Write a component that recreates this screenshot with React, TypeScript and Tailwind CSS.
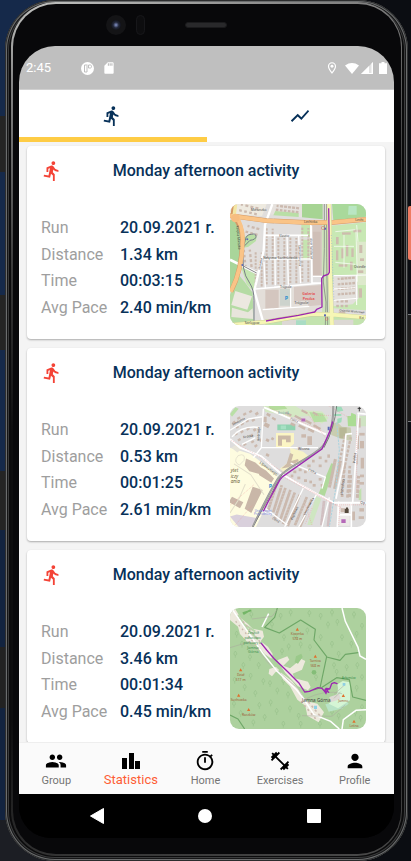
import React from "react";
import {
  MdDirectionsRun,
  MdFitnessCenter,
  MdOutlineTimer,
  MdPeople,
  MdPerson,
  MdSdCard,
  MdShowChart,
  MdOutlineLocationOn,
} from "react-icons/md";

type Pt = [number, number];
type Box = [number, number, number, number];

function Blocks({ items, fill, angle = 0 }: { items: Box[]; fill: string; angle?: number }) {
  return (
    <g fill={fill}>
      {items.map(([x, y, w, h], i) => (
        <rect key={i} x={x} y={y} width={w} height={h} transform={`rotate(${angle} ${x} ${y})`} />
      ))}
    </g>
  );
}

/* Evenly spaced small houses along both sides of a street. */
function Houses({ from, to, count, offset = 9, size = 7, fill = "#cbb9ae" }: { from: Pt; to: Pt; count: number; offset?: number; size?: number; fill?: string }) {
  const dx = to[0] - from[0];
  const dy = to[1] - from[1];
  const len = Math.hypot(dx, dy);
  const angle = (Math.atan2(dy, dx) * 180) / Math.PI;
  return (
    <g fill={fill}>
      {Array.from({ length: count }, (_, i) => {
        const t = (i + 0.5) / count;
        const x = from[0] + dx * t;
        const y = from[1] + dy * t;
        return [-1, 1].map((s) => {
          const cx = x - (dy / len) * offset * s;
          const cy = y + (dx / len) * offset * s;
          const k = size + ((i * 3 + s) % 3);
          return (
            <rect key={`${i}${s}`} x={cx - k / 2} y={cy - size / 2} width={k} height={size} transform={`rotate(${angle} ${cx} ${cy})`} />
          );
        });
      })}
    </g>
  );
}

const mapText = "[font-family:'Noto_Sans',sans-serif]";

function CityMap() {
  return (
    <svg viewBox="24 27 408 363" preserveAspectRatio="none" className="block h-full w-full" role="img" aria-label="Route map">
      <rect x="24" y="27" width="408" height="363" fill="#e0dedd" />
      <path d="M24 27h110l-14 36-96-6z" fill="#eeeae0" />
      <path d="M24 75h30l4 80-14 90-20 40z" fill="#a9d59a" />
      <path d="M64 90l50 10 6 30-16 90-42-10z" fill="#e2dfdd" />
      <path d="M62 130l26-16 16 8-2 16-24 18-16 2z" fill="#b9dfa6" />
      <path d="M52 212l50 26-8 50-20-20-12-38z" fill="#c4e5b1" />
      <path d="M46 235l22 26 24 32 3 97H24v-90z" fill="#b5dba4" />
      <path d="M40 288l50 16-14 40-48-14z" fill="#ece8e0" />
      <path d="M30 338l48 14 14-12 2 32-66-6z" fill="#e8e5dc" />
      <path d="M240 27h62v46l-62-6z" fill="#a6d493" />
      <path d="M330 27h102v38l-98 12z" fill="#a9d99b" />
      <path d="M380 33h24v26h-26z" fill="#b9e6c3" />
      <path d="M150 27h90v40l-98-9z" fill="#e6e2de" />
      <path d="M160 48l70 6v12l-76-5z" fill="#b9dfa6" />
      <path d="M328 92l104-10v264l-102-6z" fill="#c8e8b4" />
      <path d="M334 240h70l6 70-18 18-60 6z" fill="#e3e0dc" />
      <path d="M404 140h28v130h-26z" fill="#dde9cc" />
      <path d="M238 90h28v36h-28zM242 134h20v60h-20z" fill="#c5e4b0" />
      <path d="M300 85h20v270h-20z" fill="#cfe3bd" />
      <path d="M130 372l140-20 160 14v24H130z" fill="#c3e3af" />
      <path d="M180 374h70v16h-70zM334 374h60v16h-60z" fill="#dcd8d4" />
      <path d="M222 376h30v14h-30z" fill="#a9dcc4" />
      <path d="M270 82l30 3v158h-28z" fill="#d6c9c2" />
      <path d="M272 110h24v130h-24z" fill="#cfbfb7" />
      <path d="M104 284l194-16 2 68-30 16-148 24z" fill="#e3ded9" />
      <path d="M130 284h40v58h-40z" fill="#d4c6bf" />
      <path d="M174 282h34v50h-34z" fill="#cdd3cd" />
      <path d="M216 276l82-6v60l-40 4v-16h-42z" fill="#d6c9c3" />
      <g>
        {([[143, 98, 270], [178, 126, 270], [214, 126, 266], [250, 96, 262], [110, 170, 276]] as [number, number, number][]).map(([x, a, b]) => (
          <Houses key={x} from={[x, a]} to={[x, b]} count={Math.round((b - a) / 11)} offset={9} size={6} />
        ))}
        <Houses from={[70, 100]} to={[112, 112]} count={3} />
        <Houses from={[74, 160]} to={[80, 220]} count={4} />
        <Houses from={[160, 38]} to={[232, 46]} count={6} offset={6} />
        <Houses from={[50, 36]} to={[110, 50]} count={4} />
        <Houses from={[345, 260]} to={[400, 256]} count={5} offset={8} />
        <Houses from={[345, 290]} to={[400, 286]} count={5} offset={8} />
        <Houses from={[340, 326]} to={[380, 326]} count={3} offset={7} />
      </g>
      <Blocks fill="#cdbcae" items={[[342, 126, 8, 22], [360, 112, 26, 7], [394, 104, 24, 8], [358, 160, 7, 30], [372, 150, 7, 34], [388, 160, 7, 26], [342, 166, 7, 30], [412, 150, 9, 24], [414, 190, 12, 8], [350, 208, 26, 7], [384, 200, 8, 26], [408, 226, 16, 8], [410, 280, 10, 28], [350, 350, 20, 6]]} />
      <path d="M340 110l60-6M366 120v98M340 202l60 6M402 110l4 150M404 90l4 50M336 154h60" stroke="#fff" strokeWidth="2" fill="none" />
      <g stroke="#fff" fill="none" strokeWidth="5">
        <path d="M151 27l-22 62-4 78-28 120 27 96" strokeWidth="7" />
        <path d="M24 194l40 20 42 20" strokeWidth="8" />
        <path d="M126 121h132M126 192h142M100 282l200-18M268 92l2 172h30" strokeWidth="5" />
        <path d="M158 121l2 150M195 121l4 148M230 121l6 144M266 90v70M126 200l4 80M206 280v60M122 344l140-10M272 244h28" strokeWidth="4" />
        <path d="M334 242l98-2M404 240v90M334 282l66-4M336 316l70-6" strokeWidth="3" />
      </g>
      <path d="M64 156l20-20q18-2 18-12t-14-6q-16 0-18 18l-8 24 2 56q4 28 20 50 12 18 12 50v70" fill="none" stroke="#777d86" strokeWidth="3" />
      <path d="M62 212l42 22" stroke="#858585" strokeWidth="3" />
      <path d="M307 27v134l-3 100 8 60-2 69M314 27v160l3 203" stroke="#858b83" strokeWidth="2.5" fill="none" />
      <path d="M24 62l110 15 130 6 70-1 98-9" fill="none" stroke="#d59a65" strokeWidth="14" />
      <path d="M36 27l-3 36q30 30 28 76-2 90-34 150" fill="none" stroke="#d59a65" strokeWidth="14" />
      <path d="M24 62l110 15 130 6 70-1 98-9" fill="none" stroke="#fac487" strokeWidth="12" />
      <path d="M40 62q24 30 22 76-2 90-36 152" fill="none" stroke="#fac487" strokeWidth="12" />
      <path d="M41 27l-5 36" stroke="#f3e7a4" strokeWidth="10" />
      <circle cx="40" cy="69" r="13" fill="#f6bd81" />
      <path d="M321 27l3 130v70l6 163M24 390l106-9 140-24 60 2 102 8" fill="none" stroke="#cdd099" strokeWidth="13" />
      <path d="M321 27l3 130v70l6 163M24 390l106-9 140-24 60 2 102 8" fill="none" stroke="#f6f6b5" strokeWidth="11" />
      <path d="M328 120l8 200" stroke="#7fa8d6" strokeDasharray="3 5" strokeWidth="1.5" />
      <g className={mapText} fontSize="10" fill="#444">
        <text x="86" y="48">Mieszczko</text>
        <text x="246" y="84">Lechicka</text>
        <text x="400" y="77">Lechi</text>
        <text x="172" y="127" fontSize="8">Klasztor</text>
        <text x="124" y="193" fontSize="9">Nałęczow</text>
        <text x="168" y="193" fontSize="9">Lazienkowska</text>
        <text x="174" y="278" fontSize="9">Trójpole</text>
        <text x="217" y="327" fontSize="11">Trójpole</text>
        <text x="396" y="218">Osiedle</text>
        <text x="352" y="349" fontSize="9" transform="rotate(5 352 349)">Osiedle Wichrowe</text>
        <text x="412" y="371">Ksi</text>
        <text x="68" y="387">Szelągow</text>
        <text transform="translate(43 92) rotate(85)">Księcia Mieszka</text>
        <text transform="translate(264 130) rotate(88)" fontSize="9">Aleje Solidarne</text>
        <text transform="translate(229 150) rotate(88)" fontSize="9">Sarmacka ulica</text>
        <text transform="translate(114 224) rotate(-78)" fontSize="9">Murawa</text>
      </g>
      <g className={mapText} fontSize="11" fill="#e54848" fontWeight="600">
        <text x="241" y="301">Galeria</text>
        <text x="242" y="314">Pestka</text>
      </g>
      <text x="188" y="316" className={mapText} fontSize="16" fontWeight="700" fill="#2a8fd0">P</text>
      <g fill="#5a68b5">
        <rect x="306" y="98" width="6" height="6" />
        <rect x="306" y="358" width="6" height="6" />
        <circle cx="61" cy="210" r="3" />
        <circle cx="76" cy="133" r="3" />
      </g>
      <g fill="none" stroke="#e06a60" strokeWidth="1.5">
        <circle cx="303" cy="99" r="5" />
        <circle cx="314" cy="372" r="4" />
      </g>
      <path d="M320 40l1 60 1 132-4 6-14 5-5 8 1 85-16 7-6 8-9 2-40 8-66 11-31 6" fill="none" stroke="#9c27b0" strokeWidth="4" strokeLinejoin="round" />
    </svg>
  );
}

function DistrictMap() {
  return (
    <svg viewBox="24 36 408 360" preserveAspectRatio="none" className="block h-full w-full" role="img" aria-label="Route map">
      <rect x="24" y="36" width="408" height="360" fill="#dedddd" />
      <path d="M24 160l60 18 84 62-20 60-46 96H24z" fill="#fefce0" />
      <path d="M24 365l20-6 60 10-16 27H50z" fill="#d9d0dc" />
      <path d="M28 160l20-12 14 14-16 12z" fill="#e7e4d8" />
      <path d="M124 36h96l20 12 60 4 20 20-20 16-50-20-50 4-40-14-30-4z" fill="#d4e8c3" />
      <path d="M140 36h48l8 8-50 6z" fill="#b4dc9c" />
      <path d="M200 70l60-4 36 20 4 34-50-20z" fill="#dedbd8" />
      <path d="M262 54l40 4 14 24-40 2z" fill="#b6dfa2" />
      <path d="M24 60l16-20 10 4-20 24z" fill="#b9dfa6" />
      <path d="M166 91h54v17h-54z" fill="#8fd3b0" />
      <path d="M176 94h16v11h-16z" fill="#a7e0c4" />
      <path d="M162 116h54v32l-14 12h-40z" fill="#fbf5c4" />
      <path d="M168 124h38v20h-14v-8h-12v18h-12z" fill="#cbb9a7" />
      <path d="M204 160l40 12 14 12-72 48-12-10 34-24z" fill="#f7f3c6" />
      <path d="M204 176l10 4-6 20 20-6 2 6-30 18-22 4 16-14z" fill="#cdbba8" />
      <path d="M326 90l20-6 14 14 26 2 4 40-30-6-32-12z" fill="#c9cdb0" />
      <path d="M352 100h22v32h-22z" fill="#b8b896" />
      <path d="M340 38h18l6 12-18 4zM346 74l14-4-2 14-12 4zM336 60h22v6h-22z" fill="#9fdcbb" />
      <path d="M376 66h26v30h-24zM388 56l14 6v6h-16z" fill="#abdc94" />
      <path d="M404 66h28v30h-26z" fill="#cfe3c3" />
      <path d="M328 206l12 4-32 94-18-8z" fill="#b0d99b" />
      <path d="M282 304l16 8-28 78h-14z" fill="#cfe6c1" />
      <path d="M410 290l8-10v36h-8z" fill="#c0e0ae" />
      <path d="M345 326h40v32h-40zM345 362h38v30h-38z" fill="#eeeae9" />
      <Blocks fill="#cbb9ae" angle={-32} items={[[40, 98, 9, 7], [54, 88, 10, 8], [70, 80, 9, 7], [88, 78, 10, 7], [30, 84, 9, 7], [44, 72, 10, 7], [62, 60, 10, 7], [80, 52, 9, 7], [98, 58, 10, 8], [36, 118, 9, 8], [54, 112, 9, 7], [72, 104, 10, 7], [92, 106, 9, 8], [46, 136, 9, 7], [62, 150, 10, 7], [86, 142, 9, 7], [96, 154, 9, 7], [110, 136, 8, 8], [84, 122, 8, 7]]} />
      <Blocks fill="#c9b7ab" angle={28} items={[[136, 56, 12, 8], [130, 84, 16, 12], [152, 68, 12, 7], [192, 52, 20, 7], [220, 62, 22, 7], [252, 76, 20, 7], [276, 90, 24, 7], [232, 90, 22, 8], [260, 100, 20, 8], [208, 84, 14, 8], [134, 132, 10, 8], [150, 128, 8, 8], [134, 176, 10, 8], [240, 46, 20, 6], [274, 52, 16, 6]]} />
      <Blocks fill="#cbb9ae" items={[[256, 126, 14, 26], [238, 120, 14, 10], [124, 68, 10, 16], [290, 186, 9, 8], [270, 196, 8, 8], [308, 196, 8, 8], [256, 210, 10, 8], [230, 222, 9, 8], [246, 228, 8, 8], [290, 210, 9, 8], [214, 228, 9, 8], [206, 240, 8, 8], [226, 246, 9, 8], [246, 254, 9, 8], [262, 258, 8, 8], [290, 250, 9, 8], [296, 268, 8, 8], [272, 268, 9, 8], [316, 180, 8, 10]]} />
      <path d="M72 192l28 12 20 18-8 16-30-8-14-18zM98 208l34 20 24 24-8 12-36-22zM40 200l28-16M92 276l30 10-34 68-20-12zM30 306l34 16-10 18-34-18z" fill="#c9b7a8" />
      <path d="M36 208l50 32 40 60M70 268l-20 46-26 40" fill="none" stroke="#e3dfcb" strokeWidth="3" />
      <Houses from={[172, 268]} to={[146, 350]} count={9} offset={8} size={8} />
      <Houses from={[198, 282]} to={[166, 376]} count={11} offset={8} size={8} />
      <Houses from={[226, 296]} to={[190, 390]} count={11} offset={8} size={8} />
      <Houses from={[262, 310]} to={[226, 394]} count={10} offset={8} size={8} />
      <Houses from={[348, 196]} to={[330, 280]} count={9} offset={8} size={9} />
      <Houses from={[378, 124]} to={[352, 250]} count={10} offset={9} size={7} />
      <Houses from={[398, 240]} to={[394, 310]} count={5} offset={12} size={9} />
      <Houses from={[316, 320]} to={[308, 392]} count={9} offset={10} size={8} fill="#d1bfc1" />
      <Houses from={[376, 210]} to={[368, 310]} count={7} offset={8} size={8} />
      <Blocks fill="#cbb9ae" items={[[406, 72, 10, 28], [402, 124, 9, 40], [398, 180, 9, 30], [412, 116, 16, 8], [414, 140, 12, 22], [416, 190, 10, 32], [414, 240, 12, 8], [412, 262, 14, 8], [412, 340, 14, 10], [410, 364, 16, 8], [390, 350, 9, 26], [356, 340, 12, 12]]} />
      <g fill="none" stroke="#fff">
        <path d="M24 134l30 26 64 26 60 52 110 62 48 24h96" strokeWidth="6" />
        <path d="M126 40l90 38 96 42" strokeWidth="6" />
        <path d="M124 44l-6 116-24 30M118 160h170M24 108l56-34 40-6M30 128q30-36 84-28M60 150l40-20" strokeWidth="4" />
        <path d="M206 206l104 42-10 34M244 280l-56 116M284 298l-54 98M322 308l-22 88M146 360l-30-14 M130 340l66 50" strokeWidth="4" />
        <path d="M410 56l-8 130-10 138M432 60l-26-2M390 118l-18 2-8 90-18 82-4 20M350 320l-4 76M388 324v72M350 360h40" strokeWidth="5" />
        <path d="M48 184q24-10 18 14l-14 14q-20-10-4-28" stroke="#dcd8c8" strokeWidth="2" />
      </g>
      <g fill="none" stroke="#e99" strokeWidth="1.3" strokeDasharray="3 3">
        <path d="M28 138l100 58 100 68 110 66h94M140 40l170 76M250 50l60 80M276 64h50M26 330l70-60M40 390l52-60M190 250l170 90M380 70l-60-34M404 110v180M250 330l20 60M270 340l-20 46M350 390l4-60" />
      </g>
      <path d="M344 86l8 80-10 110-20 120" fill="none" stroke="#a9d3df" strokeWidth="3" strokeDasharray="7 3" />
      <path d="M334 36q0 84-34 122-18 18-72 48-44 24-60 46-26 40-76 144" fill="none" stroke="#969696" strokeWidth="6" />
      <path d="M344 36q-6 64-38 124M180 240l-88 156" fill="none" stroke="#555" strokeWidth="2" />
      <path d="M334 36q0 84-34 122-18 18-72 48-44 24-60 46-26 40-76 144" fill="none" stroke="#a6a6a6" strokeWidth="3" />
      <g className={mapText} fontSize="11" fill="#444">
        <text x="228" y="168" fontSize="10">Wiosna</text>
        <text transform="translate(32 94) rotate(-26)" fontSize="9">Sandomie</text>
        <text transform="translate(64 132) rotate(-8)" fontSize="10">Krótka</text>
        <text transform="translate(112 206) rotate(36)" fontSize="11">Lipowskiego</text>
        <text transform="translate(112 140) rotate(-88)" fontSize="10">Andrzeja</text>
        <text transform="translate(204 76) rotate(24)" fontSize="9">Piotra</text>
        <text transform="translate(258 228) rotate(26)" fontSize="10">Cicha</text>
        <text transform="translate(400 206) rotate(-86)" fontSize="10">Polska</text>
        <text transform="translate(360 300) rotate(-80)" fontSize="10">Jasna Rola</text>
        <text transform="translate(250 362) rotate(-62)" fontSize="10">Umultowska</text>
        <text transform="translate(212 376) rotate(-66)" fontSize="10">Piątkowo</text>
        <text transform="translate(150 372) rotate(30)" fontSize="9">Cicha</text>
        <text x="415" y="327" fontSize="10">Op</text>
        <text x="168" y="60" fontSize="8" fill="#7aa">Boisko A</text>
      </g>
      <g className={mapText} fontSize="14" fill="#6b5f3a" fontStyle="italic">
        <text x="26" y="233">ytet</text>
        <text x="26" y="249">iczy</text>
        <text x="26" y="266">ania</text>
      </g>
      <g className={mapText} fontSize="9" fill="#7a86dd">
        <text x="98" y="351">Uniwersytet</text>
        <text x="96" y="361">Przyrodniczy</text>
      </g>
      <text x="140" y="279" className={mapText} fontSize="16" fontWeight="700" fill="#2a8fd0">P</text>
      <path d="M412 38v14M407 43h10" stroke="#222" strokeWidth="2.5" />
      <path d="M368 342h12v12h-12zM372 338h6v4h-6z" fill="#54483c" />
      <path d="M238 73h12v9h-12zM358 373h13v11h-13z" fill="#b569b8" />
      <path d="M317 98h6v10h-6z" fill="#5a68b5" />
      <path d="M332 82l-8 28-24 54-118 82-8 9-38 70-12 24" fill="none" stroke="#9c27b0" strokeWidth="4" strokeLinejoin="round" />
    </svg>
  );
}

const trees: Pt[] = [
  [88, 62], [176, 66], [206, 56], [262, 58], [296, 66], [330, 56], [396, 62], [420, 96], [150, 92], [186, 130], [256, 110], [318, 92], [346, 84], [360, 130], [330, 150], [388, 150], [404, 120], [44, 120], [60, 150], [40, 180],
  [84, 190], [64, 214], [110, 214], [38, 258], [86, 246], [124, 262], [68, 280], [100, 298], [144, 268], [166, 290], [36, 330], [112, 334], [146, 326], [184, 262], [198, 302], [128, 370], [164, 352], [204, 344], [230, 366], [94, 386], [184, 390], [236, 390],
  [200, 158], [236, 152], [264, 160], [220, 126], [296, 130], [350, 180], [336, 214], [374, 220], [406, 214], [420, 250], [344, 234], [404, 282], [420, 340], [400, 356], [350, 366], [330, 354], [294, 390], [416, 372], [56, 358], [180, 172], [282, 250],
];

function Peak({ x, y, name, height }: { x: number; y: number; name: string; height?: string }) {
  return (
    <g className={mapText} fontSize="10" fill="#9c5a35" textAnchor="middle">
      <path d={`M${x} ${y - 9}l5 9h-10z`} fill="#e0702c" />
      <text x={x} y={y + 14}>{name}</text>
      {height && <text x={x} y={y + 28}>{height}</text>}
    </g>
  );
}

function ForestMap() {
  return (
    <svg viewBox="24 39 408 363" preserveAspectRatio="none" className="block h-full w-full" role="img" aria-label="Route map">
      <rect x="24" y="39" width="408" height="363" fill="#add19e" />
      <g stroke="#92bd86" fill="none" strokeWidth="1.5">
        {trees.map(([x, y]) => (
          <path key={`${x}-${y}`} d={`M${x} ${y + 8}v-7q-6-1-4-7l4-6 4 6q2 6-4 7`} />
        ))}
      </g>
      {/* open ground along the valley */}
      <g fill="#ede9dd">
        <path d="M24 39h14l18 30 22 18 14 14 30 6 4 18-10 14 22 16 14 22-4 14-20-14-24-30-30-8-20-22-6-22-24-20z" />
        <path d="M166 196l30-12 6 10-18 18 20 8 34-28 12 6-10 26-28 12 6 14 40 10 8 16-8 10-30-12-38-40z" />
        <path d="M142 222l20-6 10 10-12 6-10 12-10-8z" />
        <path d="M176 232l34 26 26 34 16 26 34 8 20 26-16 30-34-20-6-30-24-18-22-40-22-22z" />
      </g>
      <path d="M48 60l26 40 34 34M60 84l40 26" stroke="#b8d5a9" strokeWidth="6" fill="none" />
      <path d="M222 184l16-8 4 10-14 20-10-4z" fill="#9ac98a" />
      <path d="M310 328q40 24 70-2l-12-14M310 328l10 22 44-10" fill="#b9e3c6" />
      <path d="M346 268l16-10 22 4v54l-36 24-28-14 18-16q14-20 8-42z" fill="#d5f5d5" />
      <path d="M322 306l30-10 4 16-30 10z" fill="#ddd9d4" />
      <path d="M62 54l26-8M84 46l-20 12" stroke="#74b667" strokeWidth="5" />
      <g fill="none" stroke="#6ea767" strokeWidth="3.5" strokeLinejoin="round">
        <path d="M166 39l-8 28-30 30 44 17 64-39 44 28-4 32 38 50-20 94-20 6M314 186l40 10 16-18 44-6M298 278l46-30 38 6 10 52 40 10M24 360l24 12 20 30" />
      </g>
      <circle cx="276" cy="232" r="7" fill="#84bd78" />
      <path d="M78 140q40 34 60 64l92 78 14 28" fill="none" stroke="#b4b4ac" strokeWidth="2" />
      <path d="M28 39l40 58 56 80 40 50 60 58 22 28 30 46 50 20 26 23M120 96l20-40M360 39l10 40 38 78 6 26 18 10M360 402l4-28 38-28 30-2" fill="none" stroke="#fff" strokeWidth="4.5" />
      <path d="M250 312q60-30 110-16M370 268l-34 30M356 290l-20 20M24 158l60-18M90 72l60-8 16-20M240 362l90 2 40-34" fill="none" stroke="#aaa89c" strokeWidth="1.6" />
      <g fill="#c9b7a8">
        <Houses from={[44, 70]} to={[120, 160]} count={8} offset={8} size={4} />
        <Houses from={[240, 310]} to={[290, 370]} count={5} offset={8} size={5} />
      </g>
      <Peak x={226} y={107} name="Kiczerka" height="578 m" />
      <Peak x={280} y={188} name="Tarnica" height="568 m" />
      <Peak x={56} y={229} name="Dział" height="517 m" />
      <Peak x={50} y={305} name="Suchowka" />
      <Peak x={80} y={348} name="Raczków" />
      <Peak x={364} y={306} name="Jamno" />
      <Peak x={396} y={383} name="Leśna" />
      <g className={mapText} fontSize="11" fill="#388e4a" textAnchor="middle">
        <text x="94" y="118">Zespół</text>
        <text x="92" y="133">pałacowo</text>
        <text x="92" y="147">parkowy w</text>
        <text x="92" y="161">Jamna</text>
        <text x="94" y="175">Górna</text>
        <text x="380" y="251" fontSize="10">Arłamów</text>
      </g>
      <text x="240" y="320" className={mapText} fontSize="14" fill="#444">Jamna Górna</text>
      <path d="M276 332h9v10h-9zM362 264h8v8h-8z" fill="#8fd0e4" />
      <path d="M118 145l16 20 24 28 40 38 32 32 18 28 14-2 26-11 12 2 12 14 7-12-10 2 4-4 10 2 6-16 8-3 8 3M312 296l-2-12 10 8" fill="none" stroke="#9c27b0" strokeWidth="4" strokeLinejoin="round" strokeLinecap="round" />
    </svg>
  );
}

interface Activity {
  title: string;
  date: string;
  distance: string;
  time: string;
  pace: string;
  map: React.ReactNode;
}

const activities: Activity[] = [
  { title: "Monday afternoon activity", date: "20.09.2021 r.", distance: "1.34 km", time: "00:03:15", pace: "2.40 min/km", map: <CityMap /> },
  { title: "Monday afternoon activity", date: "20.09.2021 r.", distance: "0.53 km", time: "00:01:25", pace: "2.61 min/km", map: <DistrictMap /> },
  { title: "Monday afternoon activity", date: "20.09.2021 r.", distance: "3.46 km", time: "00:01:34", pace: "0.45 min/km", map: <ForestMap /> },
];

function ActivityCard({ activity }: { activity: Activity }) {
  const rows = [
    ["Run", activity.date],
    ["Distance", activity.distance],
    ["Time", activity.time],
    ["Avg Pace", activity.pace],
  ];
  return (
    <article className="shrink-0 rounded-[4px] bg-white px-[14px] pt-[13px] pb-[14px] shadow-[0_1px_2px_rgba(0,0,0,0.3)]">
      <header className="grid h-6 grid-cols-[24px_1fr_24px] items-center">
        <MdDirectionsRun className="size-[22px] text-[#f44336]" />
        <h2 className="text-center text-[16px] leading-6 font-medium whitespace-nowrap text-[#073159]">{activity.title}</h2>
      </header>
      <div className="mt-[21px] flex justify-between pr-[5px]">
        <dl className="mt-[11px] grid h-[106px] grid-rows-4 text-[16px] leading-[26px] whitespace-nowrap">
          {rows.map(([label, value]) => (
            <div key={label} className="flex">
              <dt className="w-[79px] text-[#9e9e9e]">{label}</dt>
              <dd className="font-medium text-[#073159]">{value}</dd>
            </div>
          ))}
        </dl>
        <div className="h-[121px] w-[136px] shrink-0 overflow-hidden rounded-[9px]">{activity.map}</div>
      </div>
    </article>
  );
}

function StatusBar() {
  return (
    <div className="flex h-11 shrink-0 items-center justify-between border-b border-[#d0d0d0] bg-[#bfbfbf] pt-px pr-[7px] pl-[7px] text-white">
      <div className="flex items-center">
        <span className="w-[55px] text-[13px] leading-5">2:45</span>
        <svg viewBox="0 0 13 13" className="mr-[8px] size-[13px]" aria-hidden="true">
          <circle cx="6.5" cy="6.5" r="6.5" fill="#fff" />
          <path d="M6.500 3H3.500v7h2.500V3.500M7.500 3v3h2q1-.2 1-1.500T9.500 3z" fill="none" stroke="#bfbfbf" strokeWidth="1" />
        </svg>
        <MdSdCard className="size-[14px]" />
      </div>
      <div className="flex items-center">
        <MdOutlineLocationOn className="mr-[6px] size-[14px]" />
        <svg viewBox="0 0 14 11" className="mr-[2px] h-[11px] w-[14px]" aria-hidden="true">
          <path d="M0 2.500Q7-2.300 14 2.500L7 11z" fill="#fff" />
        </svg>
        <svg viewBox="0 0 12 12" className="mr-[6px] size-3" aria-hidden="true">
          <path d="M12 0v12H0z" fill="#fff" opacity="0.55" />
          <path d="M8 4v8H0zM10.500 1.500L12 0v12H8v-1h2.500z" fill="#fff" />
        </svg>
        <svg viewBox="0 0 8 12" className="h-3 w-2" aria-hidden="true">
          <path d="M2.500 0h3v1.200H8V12H0V1.200h2.500z" fill="#fff" />
        </svg>
      </div>
    </div>
  );
}

function StatisticsIcon() {
  return (
    <svg viewBox="0 0 22 22" className="size-[22px]" fill="currentColor" aria-hidden="true">
      <path d="M2 8h5v11H2zM9 3h5v16H9zM15 11h5v8h-5z" />
    </svg>
  );
}

const tabs = [
  { label: "Group", icon: <MdPeople className="size-[22px]" /> },
  { label: "Statistics", icon: <StatisticsIcon />, active: true },
  { label: "Home", icon: <MdOutlineTimer className="size-[22px]" /> },
  { label: "Exercises", icon: <MdFitnessCenter className="size-[22px]" /> },
  { label: "Profile", icon: <MdPerson className="size-[22px]" /> },
];

function Screen() {
  return (
    <div className="flex min-h-0 flex-1 flex-col overflow-hidden rounded-t-[36px] rounded-b-[32px] bg-black">
      <StatusBar />
      <div role="tablist" className="grid h-[52px] shrink-0 grid-cols-2 bg-white text-[#073159]">
        <button role="tab" aria-selected="true" aria-label="Activities" className="flex items-center justify-center border-b-[5px] border-[#fecc45] pt-1 pr-[2px]">
          <MdDirectionsRun className="size-[22px]" />
        </button>
        <button role="tab" aria-selected="false" aria-label="Charts" className="flex items-center justify-center">
          <MdShowChart className="size-[22px]" />
        </button>
      </div>
      <main className="flex min-h-0 flex-1 flex-col gap-[9px] overflow-y-auto bg-[#f4f4f4] pt-1 pr-[9px] pl-2 [scrollbar-width:none]">
        {activities.map((activity, i) => (
          <ActivityCard key={i} activity={activity} />
        ))}
      </main>
      <nav className="grid h-[52px] shrink-0 grid-cols-5 border-t border-[#eeeeee] bg-[#fafafa] pr-[2px]">
        {tabs.map((tab) => (
          <button key={tab.label} className="flex flex-col items-center pt-[7px] text-black">
            {tab.icon}
            {tab.active ? (
              <span className="text-[13px] leading-4 text-[#fe5d35]">{tab.label}</span>
            ) : (
              <span className="text-[11px] leading-[18px] text-[#757575]">{tab.label}</span>
            )}
          </button>
        ))}
      </nav>
      <div className="grid h-11 shrink-0 grid-cols-3 place-items-center bg-black pr-[26px] pl-6 text-white">
        <button aria-label="Back">
          <svg viewBox="0 0 14 16" className="h-4 w-[14px]"><path d="M13.500.5v15L.5 8z" fill="#fff" stroke="#fff" strokeLinejoin="round" /></svg>
        </button>
        <button aria-label="Home screen" className="size-[14px] rounded-full bg-white" />
        <button aria-label="Recent apps" className="size-[14px] rounded-[1px] bg-white" />
      </div>
    </div>
  );
}

export default function App() {
  return (
    <div className="flex h-screen min-h-[600px] overflow-hidden bg-[#111318] bg-[linear-gradient(to_right,transparent_50%,#0b0d12_50%),linear-gradient(#15294a_0_116px,#242424_116px_172px,#15294a_172px_295px,#242424_295px_350px,#15294a_350px_471px,#242424_471px_530px,#12233f_530px_647px,#222_647px_708px,#12233f_708px_820px,#1c1e24_820px)] font-[Roboto,sans-serif]">
      <div className="ml-[5px] flex min-w-0 flex-1 flex-col rounded-[50px] bg-[#0b0b0c] px-[6px] pt-[2px] pb-[5px] shadow-[inset_0_0_0_1px_#2c2d2e,inset_0_0_0_2px_#6b6d6e,inset_0_0_0_3px_#161617,inset_0_0_0_4px_#3a3b3c]">
        <div className="flex min-h-0 flex-1 flex-col rounded-[45px] bg-[linear-gradient(165deg,#c5c6c4_0%,#888_8%,#3a3a3a_28%,#0d0d0e_45%,#0d0d0e_75%,#4b4b4b_100%)] pt-[2px] pr-px pb-[2px] pl-[2px]">
          <div className="flex min-h-0 flex-1 flex-col rounded-[43px] bg-[#08080a] pr-[7px] pb-4 pl-[6px]">
            <div className="flex h-[42px] shrink-0 items-center pl-[87px]">
              <div className="grid size-5 place-items-center rounded-full bg-[#141416]">
                <div className="size-[10px] rounded-full bg-[radial-gradient(#6d7aa8_10%,#23283a_40%,#0c0d12_80%)]" />
              </div>
              <div className="ml-[10px] h-5 w-[9px] rounded-full border border-[#17171a] bg-[#0d0d0f]" />
              <div className="ml-[40px] h-[6px] w-[42px] rounded-full border border-[#1a1a1c] bg-[#29292b]" />
            </div>
            <Screen />
          </div>
        </div>
      </div>
      <div className="flex w-[3px] shrink-0 flex-col pt-[206px]">
        <div className="h-[54px] rounded-l-[2px] bg-[#ee7b62]" />
        <div className="mt-[54px] h-[108px] border-y border-[#77797c] bg-[#1d1d1d]" />
      </div>
    </div>
  );
}
